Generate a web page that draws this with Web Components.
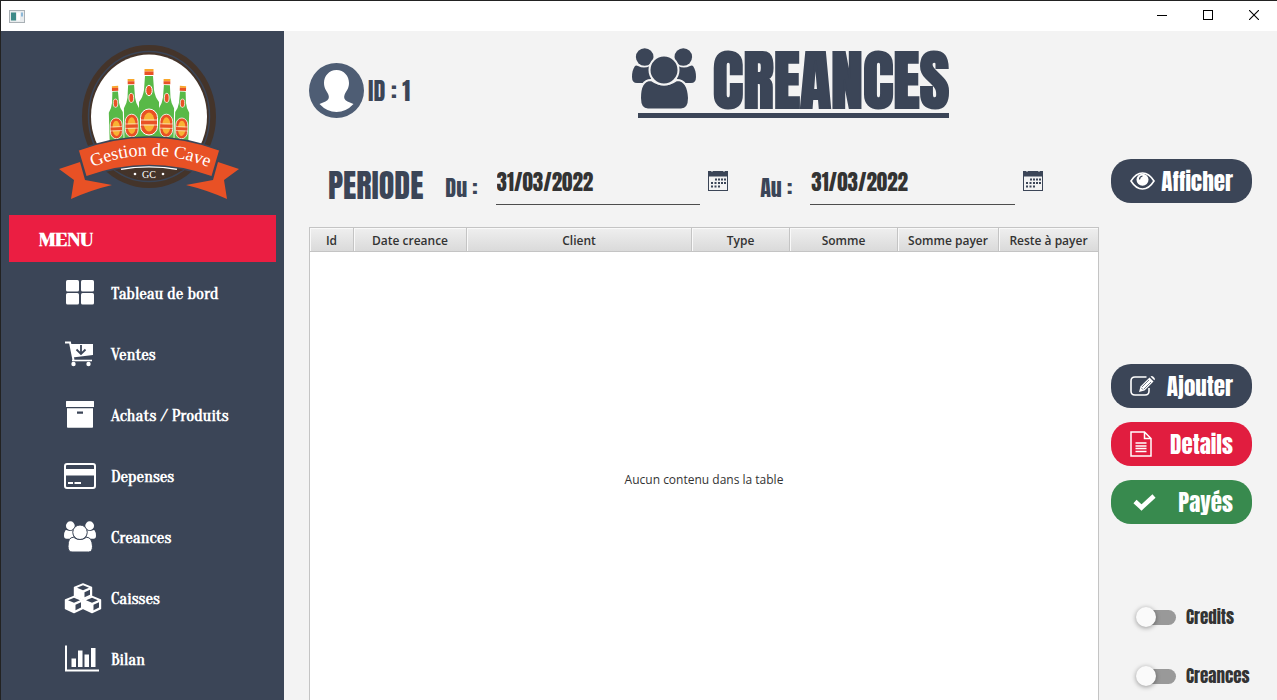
<!DOCTYPE html>
<html lang="fr">
<head>
<meta charset="utf-8">
<title>Gestion de Cave</title>
<style>
	html, body {
		height: 100%;
		margin: 0;
	}

	body {
		--navy: #3b4557;
		--red: #e11d3f;
		--green: #388a4e;
		--panel: #f3f3f3;
		--display: Anton, Impact, "Liberation Sans", sans-serif;
		--menu: Oranienbaum, "Liberation Serif", serif;
		overflow: hidden;
		font: 12px "Open Sans", "Noto Sans", sans-serif;
		color: #333;
	}
</style>
</head>
<body>
<cave-window>
	<side-menu slot="side">
		<cave-logo slot="logo"></cave-logo>
		<menu-item icon="grid">Tableau de bord</menu-item>
		<menu-item icon="cart">Ventes</menu-item>
		<menu-item icon="archive">Achats / Produits</menu-item>
		<menu-item icon="card">Depenses</menu-item>
		<menu-item icon="users">Creances</menu-item>
		<menu-item icon="cubes">Caisses</menu-item>
		<menu-item icon="chart">Bilan</menu-item>
	</side-menu>
	<page-header user="ID : 1">CREANCES</page-header>
	<creance-page></creance-page>
</cave-window>

<script>
// Each icon: [viewBox width, viewBox height, markup]
const ICONS = {
	grid: [32, 32, `<g fill="currentColor"><rect x="2" y="3" width="13" height="11.5" rx="1.6"/><rect x="17" y="3" width="13" height="11.5" rx="1.6"/><rect x="2" y="16" width="13" height="11.5" rx="1.6"/><rect x="17" y="16" width="13" height="11.5" rx="1.6"/></g>`],
	cart: [32, 32, `<path d="M1 4.5h5l3.5 17.5" fill="none" stroke="currentColor" stroke-width="2"/>
		<path d="M6.5 6H29v11L8.500 19.500z" fill="currentColor"/>
		<path d="M8 22.500h20" stroke="currentColor" stroke-width="1.6"/>
		<circle cx="9.5" cy="26" r="2.2" fill="currentColor"/><circle cx="24.5" cy="26" r="2.2" fill="currentColor"/>
		<path d="M17 7v8M12.500 11.500l4.500 4.500 4.500-4.500" fill="none" stroke="var(--navy)" stroke-width="1.8"/>`],
	archive: [32, 32, `<path fill="currentColor" fill-rule="evenodd" d="M2.500 2h27q.5 0 .5.500V8H2V2.500q0-.5.500-.5zM3 9.200h26V28q0 .8-.8.800H3.800Q3 28.800 3 28zm10 3.300v2.200h6v-2.200z"/>`],
	card: [32, 32, `<rect x="1" y="4" width="30" height="24" rx="2" fill="none" stroke="currentColor" stroke-width="2"/>
		<path d="M1 9h30v6.500H1zM4 22h5v2H4zM10.500 22H17v2h-6.500z" fill="currentColor"/>`],
	users: [64, 61, `<g fill="currentColor"><path d="M3 18q1-1 3 0 6 3 12 0l2 6-1 8-2 3H5q-5 0-5-6 0-7 3-11zM61 18q-1-1-3 0-6 3-12 0l-2 6 1 8 2 3h12q5 0 5-6 0-7-3-11z"/>
		<circle cx="12.7" cy="9" r="8.8"/><circle cx="51.3" cy="9" r="8.8"/></g>
		<g fill="currentColor" stroke="var(--icon-gap, var(--navy))" stroke-width="2"><path d="M8 50q0-18 11-18 13 9 26 0 11 0 12 18 0 11.500-8 11.500H16q-8 0-8-11.500z"/><circle cx="32" cy="22" r="14.5"/></g>`],
	cubes: [38, 32, `<g fill="currentColor" stroke="currentColor" stroke-width="1.4" stroke-linejoin="round">
		<path d="M19 2l8.500 3.500v8L19 17l-8.500-3.500v-8z"/>
		<path d="M10 14.500l8.500 3.500v8.500L10 30.500 1.500 26.500V18zM28 14.500l8.500 3.500v8.500L28 30.500l-8.500-4V18z"/></g>
		<g fill="var(--navy)"><path d="M19 3.200l6 2.600-6 2.500-6-2.500zM20.500 10.200l5.500-2.500v5l-5.500 2.500zM10 15.700l6 2.600-6 2.500-6-2.500zM11.500 22.700l5.500-2.500v5.300l-5.500 2.800zM28 15.700l6 2.600-6 2.500-6-2.500zM29.500 22.700l5.500-2.500v5.300l-5.500 2.800z"/></g>`],
	chart: [36, 32, `<path d="M2 2.500v25h33" fill="none" stroke="currentColor" stroke-width="2"/>
		<path d="M7.500 15.500h4.500v8.500H7.500zM14 7.500h4.500V24H14zM20.500 11.500H25V24h-4.500zM27 5h4.500v19H27z" fill="currentColor"/>`],
	eye: [25, 18, `<path d="M1 9q5-8 11.500-8T24 9q-5 8-11.500 8T1 9z" fill="none" stroke="currentColor" stroke-width="1.6"/>
		<circle cx="12.5" cy="7.8" r="6" fill="currentColor"/><path d="M9.500 7.500q0-3 3-3.500" fill="none" stroke="var(--navy)" stroke-width="1.2"/>`],
	edit: [25, 22, `<path d="M16.500 2H5Q1 2 1 6v10q0 4 4 4h10q4 0 4-4v-3" fill="none" stroke="currentColor" stroke-width="1.6"/>
		<path d="M9 17l1.500-5.500L19.500 2.500l4 4L14.500 15.500z" fill="currentColor"/><path d="M20.500 1.500q1.300-1.200 2.600 0l1.200 1.200q1.200 1.300 0 2.600z" fill="currentColor"/>
		<path d="M12 12l7-7M14 14l7-7M11.200 12.800l2 2" stroke="var(--navy)" stroke-width=".7"/>`],
	doc: [22, 26, `<path d="M1 1h13.500L21 7.500V25H1zM14.500 1v6.500H21" fill="none" stroke="currentColor" stroke-width="1.5"/>
		<path d="M5.500 12h11M5.500 15h11M5.500 17.500h11M5.500 20.500h11" stroke="currentColor" stroke-width="1.3"/>`],
	check: [28, 20, `<path d="M5 9.500l6.500 6L24 4" fill="none" stroke="currentColor" stroke-width="4.6"/>`],
	calendar: [20, 20, `<rect x=".5" y="1" width="19" height="18.5" fill="none" stroke="var(--navy)"/>
		<path d="M0 0h3v1h2V0h10v1h2V0h3v5.500H0z" fill="var(--navy)"/>
		<g fill="var(--navy)"><path d="M7 7.500h2v2H7zM10 7.500h2v2h-2zM13 7.500h2v2h-2zM16 7.500h2v2h-2zM3 11h2v2H3zM6.500 11h2v2h-2zM10 11h2v2h-2zM13 11h2v2h-2zM16 11h2v2h-2zM3 14.500h2v2H3zM6.500 14.500h2v2h-2zM10 14.500h2v2h-2z"/></g>`],
	avatar: [55, 55, `<circle cx="27.5" cy="27.5" r="27.5" fill="#4e5d74"/>
		<path d="M27.500 7C35 7 40 13 40 20c0 6-3 8-4.500 12-1 3 0 5 3 6.500l6 2.500Q37 49 27.500 49T10.500 41l6-2.500c3-1.500 4-3.500 3-6.500C18 28 15 26 15 20 15 13 20 7 27.500 7z" fill="#fff"/>`],
	app: [16, 13, `<rect x=".5" y=".5" width="15" height="12" fill="#e9ecee" stroke="#a9b0b5"/><path d="M2 2.500h5v8H2z" fill="#3e8a88"/><path d="M8 2.500h3v8H8z" fill="#fff"/><path d="M12 2.500h2v4h-2z" fill="#8db8d8"/>`],
	minimize: [10, 10, `<path d="M0 5.500h10" stroke="#000"/>`],
	maximize: [10, 10, `<rect x=".5" y=".5" width="9" height="9" fill="none" stroke="#000"/>`],
	close: [10, 10, `<path d="M0 0l10 10M10 0L0 10" stroke="#000" stroke-width="1.1"/>`]
};

/**
 * Base class: open shadow root filled from render()
 */
class CaveElement extends HTMLElement {
	constructor() {
		super();
		this.attachShadow({ mode: 'open' });
	}

	connectedCallback() {
		this.shadowRoot.innerHTML = this.render();
	}
}

class UiIcon extends CaveElement {
	render() {
		const [w, h, markup] = ICONS[this.getAttribute('name')];
		const width = this.getAttribute('width') || w;
		return `
			<style>
				:host { display: block; flex: none; }
				svg { display: block; }
			</style>
			<svg viewBox="0 0 ${w} ${h}" width="${width}" height="${Math.round(width * h / w)}" aria-hidden="true">${markup}</svg>
		`;
	}
}
customElements.define('ui-icon', UiIcon);

class CaveLogo extends CaveElement {
	render() {
		return `
			<style>
				:host { display: block; padding-left: 12px; }
				svg { display: block; margin: 0 auto; }
				text { font-family: "Liberation Serif", serif; fill: #fff; }
			</style>
			<svg width="180" height="155" viewBox="0 0 180 155" role="img" aria-label="Gestion de Cave">
				<defs>
					<path id="arc" d="M29 124Q90 97 154 124"/>
					<g id="bottle">
						<path d="M-4.500 0h9v2.500h-9z" fill="#f9a72b"/>
						<path d="M-4.500 2.500h9V6h-9z" fill="#e85125"/>
						<path d="M-4 7h8l1 14q1 7 5 12v40h-20V33q4-5 5-12z" fill="#58b947"/>
						<ellipse cy="21.5" rx="3.2" ry="5.2" fill="#e85125" stroke="#fff"/>
						<rect x="-8.5" y="40" width="17" height="26" rx="8.5" fill="#e85125" stroke="#fff"/>
						<ellipse cy="53" rx="5.5" ry="9.5" fill="#f9b233"/>
						<path d="M-8 51.500H8v4H-8z" fill="#e85125"/><path d="M-8 51H8M-8 56H8" stroke="#fff" stroke-width=".7"/>
					</g>
				</defs>
				<ellipse cx="90" cy="71.5" rx="67" ry="71.5" fill="#44342a"/>
				<ellipse cx="90" cy="71.5" rx="60.5" ry="65" fill="none" stroke="var(--navy)" stroke-width="1.5"/>
				<ellipse cx="90" cy="71.5" rx="58" ry="62" fill="#fff"/>
				<path d="M50 123q40-6 80 0L116 128Q90 140 64 128z" fill="#44342a"/>
				<use href="#bottle" transform="translate(56 41) scale(.7 .8) rotate(-2)"/>
				<use href="#bottle" transform="translate(124 41) scale(.7 .8) rotate(2)"/>
				<use href="#bottle" transform="translate(72 34) scale(.75 .88) rotate(-1)"/>
				<use href="#bottle" transform="translate(108 34) scale(.75 .88) rotate(1)"/>
				<use href="#bottle" transform="translate(90 24)"/>
				<path d="M21 117L0 124l15 11-3 19q20-9 41-14l-27-5z" fill="#e85125"/>
				<path d="M159 117l21 7-15 11 3 19q-20-9-41-14l27-5z" fill="#e85125"/>
				<path d="M62 124Q90 119 118 124" fill="none" stroke="#fff" stroke-width="2"/>
				<path d="M19 105Q90 79 161 105L153 132Q90 109 27 132z" fill="#e85125" stroke="var(--navy)" stroke-width="1.5"/>
				<text font-size="18"><textPath href="#arc" startOffset="50%" text-anchor="middle">Gestion de Cave</textPath></text>
				<text x="90" y="133" font-size="10" text-anchor="middle">GC</text>
				<g fill="#fff"><circle cx="76" cy="129" r="1.3"/><circle cx="104" cy="129" r="1.3"/></g>
			</svg>
		`;
	}
}
customElements.define('cave-logo', CaveLogo);

class MenuItem extends CaveElement {
	render() {
		return `
			<style>
				:host { display: block; }
				a {
					display: flex;
					align-items: center;
					height: 61px;
					padding-left: 55px;
					gap: 9px;
					color: #fff;
					font: bold 17px var(--menu);
					text-decoration: none;
				}
				.icon {
					width: 38px;
					padding-bottom: 2px;
				}
			</style>
			<a href="#${this.getAttribute('icon')}">
				<span class="icon"><ui-icon name="${this.getAttribute('icon')}" width="${this.iconWidth}"></ui-icon></span>
				<slot></slot>
			</a>
		`;
	}

	get iconWidth() {
		return { cubes: 38, chart: 36 }[this.getAttribute('icon')] || 32;
	}
}
customElements.define('menu-item', MenuItem);

class SideMenu extends CaveElement {
	render() {
		return `
			<style>
				:host {
					display: block;
					box-sizing: border-box;
					height: 100%;
					padding: 14px 8px 0;
					background: var(--navy);
				}
				h2 {
					margin: 15px 0 0;
					padding: 3px 30px 0;
					background: #eb1e42;
					color: #fff;
					font: bold 17px/44px Chonburi, "Liberation Serif", serif;
				}
				nav { padding-top: 1px; }
			</style>
			<slot name="logo"></slot>
			<h2>MENU</h2>
			<nav><slot></slot></nav>
		`;
	}
}
customElements.define('side-menu', SideMenu);

class PageHeader extends CaveElement {
	render() {
		return `
			<style>
				:host {
					display: grid;
					grid-template-columns: 1fr auto 1fr;
					padding: 17px 0 26px;
					color: var(--navy);
					font-family: var(--display);
				}
				.user {
					display: flex;
					align-items: center;
					gap: 4px;
					height: 85px;
					font-size: 24px;
				}
				.title { margin-left: 20px; }
				h1 {
					display: flex;
					gap: 17px;
					height: 61px;
					margin: 0;
					font: 64px/66px var(--display);
					-webkit-text-stroke: 2px;
				}
				hr {
					height: 5px;
					margin: 4px 0 0 6px;
					border: 0;
					background: var(--navy);
				}
				ui-icon { --icon-gap: var(--panel); }
			</style>
			<div class="user"><ui-icon name="avatar"></ui-icon>${this.getAttribute('user')}</div>
			<div class="title">
				<h1><ui-icon name="users"></ui-icon><span><slot></slot></span></h1>
				<hr>
			</div>
		`;
	}
}
customElements.define('page-header', PageHeader);

class DateField extends CaveElement {
	render() {
		return `
			<style>
				:host { display: flex; align-items: flex-start; flex: 1; min-width: 0; }
				label {
					margin-right: 18px;
					color: var(--navy);
					font: 22px/58px var(--display);
					white-space: nowrap;
				}
				input {
					box-sizing: border-box;
					flex: 1;
					width: 0;
					height: 46px;
					padding: 0 1px;
					border: 0;
					border-bottom: 1px solid #4d4d4d;
					background: none;
					color: #333;
					font: 21px var(--display);
				}
				button {
					margin: 12px 0 0 8px;
					padding: 0;
					border: 0;
					background: none;
				}
			</style>
			<label for="date">${this.getAttribute('label')}</label>
			<input id="date" type="text" value="${this.getAttribute('value')}">
			<button type="button" aria-label="Calendrier"><ui-icon name="calendar"></ui-icon></button>
		`;
	}
}
customElements.define('date-field', DateField);

class PillButton extends CaveElement {
	render() {
		return `
			<style>
				:host { display: block; }
				button {
					display: flex;
					align-items: center;
					justify-content: space-between;
					width: 100%;
					height: 44px;
					padding: 0 19px;
					border: 0;
					border-radius: 20px;
					background: var(--pill, var(--navy));
					color: #fff;
					font: 23px var(--display);
				}
			</style>
			<button type="button"><ui-icon name="${this.getAttribute('icon')}"></ui-icon><slot></slot></button>
		`;
	}
}
customElements.define('pill-button', PillButton);

class ToggleSwitch extends CaveElement {
	render() {
		return `
			<style>
				:host { display: block; }
				label {
					display: flex;
					align-items: center;
					gap: 10px;
					height: 24px;
					padding-left: 29px;
					font: 17px var(--display);
				}
				input {
					appearance: none;
					display: flex;
					align-items: center;
					flex: none;
					width: 36px;
					height: 15px;
					margin: 0;
					border-radius: 8px;
					background: #999;
				}
				input::before {
					content: "";
					flex: none;
					width: 20px;
					height: 20px;
					margin-left: -4px;
					border-radius: 50%;
					background: #fafafa;
					box-shadow: 0 1px 5px rgba(0, 0, 0, .4);
				}
				input:checked { justify-content: flex-end; }
			</style>
			<label><input type="checkbox"><slot></slot></label>
		`;
	}
}
customElements.define('toggle-switch', ToggleSwitch);

class DataTable extends CaveElement {
	static columns = [['Id', 44], ['Date creance', 113], ['Client', 225], ['Type', 98], ['Somme', 108], ['Somme payer', 101], ['Reste à payer', 99]];

	render() {
		const total = DataTable.columns.reduce((sum, [, w]) => sum + w, 0);
		return `
			<style>
				:host {
					display: flex;
					flex-direction: column;
					border: 1px solid #c4c4c4;
					border-bottom: 0;
					background: #fff;
				}
				table {
					width: 100%;
					table-layout: fixed;
					border-collapse: separate;
					border-spacing: 0;
				}
				th {
					height: 24px;
					box-sizing: border-box;
					padding: 2px 0 0;
					border-right: 1px solid #c4c4c4;
					border-bottom: 1px solid #c4c4c4;
					background: linear-gradient(#efefef, #dadada);
					box-shadow: inset 1px 1px #f9f9f9;
					font-size: 12px;
					font-weight: 600;
					line-height: 16px;
					white-space: nowrap;
				}
				th:last-child { border-right: 0; }
				p {
					display: flex;
					flex: 1;
					align-items: center;
					justify-content: center;
					margin: 0;
					padding-top: 6px;
				}
			</style>
			<table>
				<thead><tr>${DataTable.columns.map(([name, w]) => `<th scope="col" style="width: ${w / total * 100}%">${name}</th>`).join('')}</tr></thead>
			</table>
			<p>Aucun contenu dans la table</p>
		`;
	}
}
customElements.define('data-table', DataTable);

class CreancePage extends CaveElement {
	render() {
		return `
			<style>
				:host {
					display: grid;
					grid-template-columns: 1fr 141px;
					gap: 12px;
					flex: 1;
				}
				.list { display: flex; flex-direction: column; min-width: 0; }
				.period {
					display: flex;
					align-items: flex-start;
					height: 68px;
					padding: 0 56px 0 19px;
				}
				h2 {
					margin: 0 22px 0 0;
					color: var(--navy);
					font: 32px/54px var(--display);
				}
				date-field + date-field { margin-left: 32px; }
				data-table { flex: 1; }
				.actions {
					display: flex;
					flex-direction: column;
					gap: 14px;
					margin-top: 161px;
				}
				.red { --pill: var(--red); }
				.green { --pill: var(--green); }
				.filters {
					display: flex;
					flex-direction: column;
					gap: 35px;
					margin-top: 81px;
				}
			</style>
			<section class="list">
				<div class="period">
					<h2>PERIODE</h2>
					<date-field label="Du :" value="31/03/2022"></date-field>
					<date-field label="Au :" value="31/03/2022"></date-field>
				</div>
				<data-table></data-table>
			</section>
			<aside>
				<pill-button icon="eye">Afficher</pill-button>
				<div class="actions">
					<pill-button icon="edit">Ajouter</pill-button>
					<pill-button icon="doc" class="red">Details</pill-button>
					<pill-button icon="check" class="green">Payés</pill-button>
				</div>
				<div class="filters">
					<toggle-switch>Credits</toggle-switch>
					<toggle-switch>Creances</toggle-switch>
				</div>
			</aside>
		`;
	}
}
customElements.define('creance-page', CreancePage);

class CaveWindow extends CaveElement {
	render() {
		return `
			<style>
				:host {
					display: flex;
					flex-direction: column;
					box-sizing: border-box;
					height: 100vh;
					overflow: hidden;
					border: solid #222;
					border-width: 1px 0 0 1px;
				}
				.bar {
					display: flex;
					align-items: center;
					flex: none;
					height: 30px;
					padding-left: 8px;
					background: #fff;
				}
				.controls { display: flex; margin-left: auto; }
				button {
					display: flex;
					justify-content: center;
					width: 46px;
					padding: 9px 0 11px;
					border: 0;
					background: none;
				}
				.body {
					display: grid;
					grid-template-columns: 283px 1fr;
					flex: 1;
					min-height: 0;
				}
				main {
					display: flex;
					flex-direction: column;
					min-height: 0;
					padding: 0 25px;
					background: var(--panel);
				}
			</style>
			<div class="bar">
				<ui-icon name="app"></ui-icon>
				<div class="controls">
					<button type="button" aria-label="Réduire"><ui-icon name="minimize"></ui-icon></button>
					<button type="button" aria-label="Agrandir"><ui-icon name="maximize"></ui-icon></button>
					<button type="button" aria-label="Fermer"><ui-icon name="close"></ui-icon></button>
				</div>
			</div>
			<div class="body">
				<slot name="side"></slot>
				<main><slot></slot></main>
			</div>
		`;
	}
}
customElements.define('cave-window', CaveWindow);
</script>
</body>
</html>
